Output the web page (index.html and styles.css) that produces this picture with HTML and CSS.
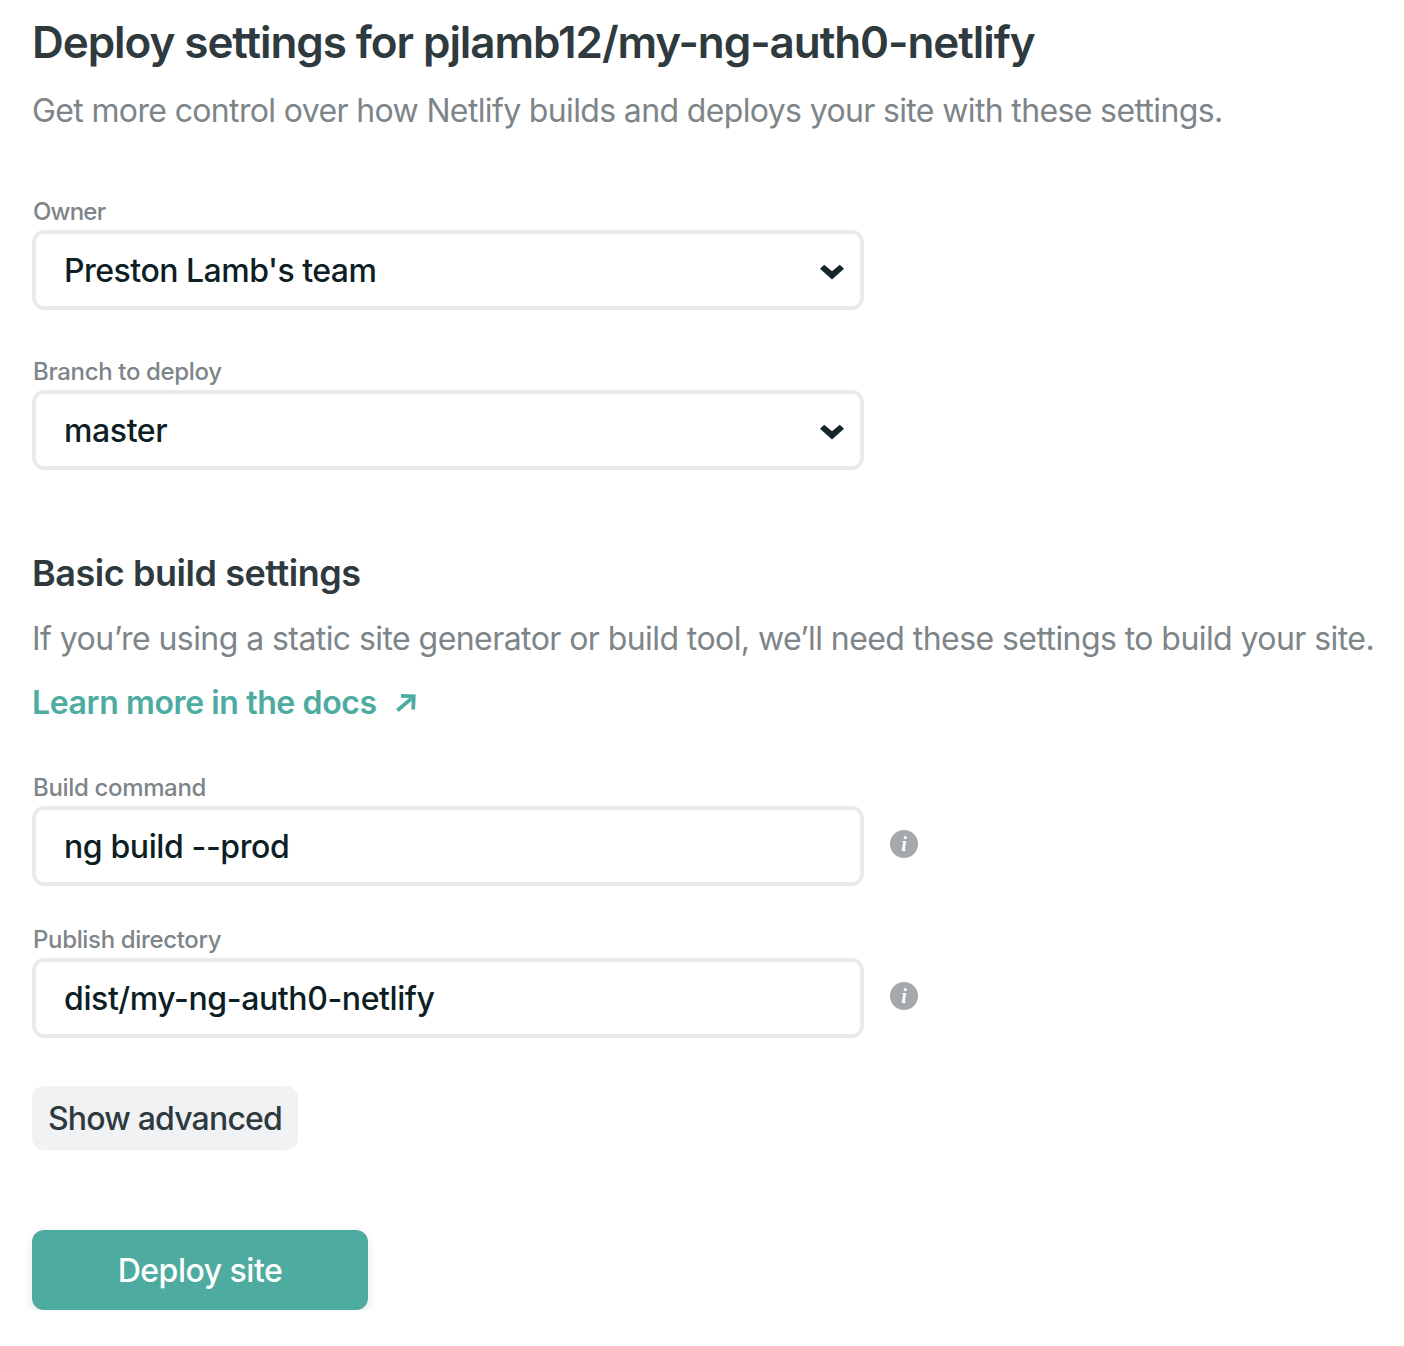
FILE: index.html
```html
<!DOCTYPE html>
<html lang="en">
<head>
<meta charset="utf-8">
<title>Deploy settings</title>
<link rel="stylesheet" href="styles.css">
</head>
<body>
<main class="page">
  <h1 class="title">Deploy settings for pjlamb12/my-ng-auth0-netlify</h1>
  <p class="text intro">Get more control over how Netlify builds and deploys your site with these settings.</p>

  <div class="field">
    <span class="label owner">Owner</span>
    <div class="control">
      <span class="value team">Preston Lamb's team</span>
      <svg class="chevron" width="24" height="16" viewBox="0 0 24 16"><path d="M0 4.8 4.2.8l7.8 6.4L19.8.8 24 4.8 12 15.4Z" fill="#15262c"/></svg>
    </div>
  </div>
  <div class="field branch-field">
    <span class="label branch">Branch to deploy</span>
    <div class="control">
      <span class="value master">master</span>
      <svg class="chevron" width="24" height="16" viewBox="0 0 24 16"><path d="M0 4.8 4.2.8l7.8 6.4L19.8.8 24 4.8 12 15.4Z" fill="#15262c"/></svg>
    </div>
  </div>

  <h2 class="subtitle">Basic build settings</h2>
  <p class="text hint">If you’re using a static site generator or build tool, we’ll need these settings to build your site.</p>
  <a class="link"><span>Learn more in the docs</span><svg width="22" height="20" viewBox="0 0 22 20"><path d="M2.3 17.5 17 5.2M6 2.8 18.8 3.3 18.2 16.5" fill="none" stroke="#4dab9f" stroke-width="3.7"/></svg></a>

  <div class="field command-field">
    <span class="label command">Build command</span>
    <div class="row">
      <div class="control"><span class="value build">ng build --prod</span></div>
      <span class="info">i</span>
    </div>
  </div>
  <div class="field publish-field">
    <span class="label publish">Publish directory</span>
    <div class="row">
      <div class="control"><span class="value dist">dist/my-ng-auth0-netlify</span></div>
      <span class="info">i</span>
    </div>
  </div>

  <button class="button advanced">Show advanced</button>
  <button class="button deploy">Deploy site</button>
</main>
</body>
</html>
```
FILE: styles.css
```css
* { box-sizing: border-box; }
body { margin: 0; background: #fff; font-family: Inter, "Liberation Sans", sans-serif; }
.page { display: flex; flex-direction: column; align-items: flex-start; padding: 13px 0 0 32px; }
.title, .subtitle, .text { margin: 0; white-space: nowrap; }
.title { font-size: 44px; line-height: 58px; font-weight: 600; letter-spacing: -1.06px; color: #2f3a3f; }
.text { font-size: 32px; line-height: 48px; letter-spacing: -0.64px; color: #7d8589; }
.intro { margin-top: 16px; }
.field { display: flex; flex-direction: column; align-items: flex-start; }
.intro + .field { margin-top: 57px; }
.label { padding: 2px 0 0 1px; font-size: 24px; line-height: 36px; font-weight: 500; letter-spacing: -0.34px; color: #7d8589; white-space: nowrap; }
.owner { letter-spacing: -0.8px; }
.control { display: flex; align-items: center; justify-content: space-between; width: 832px; height: 80px; padding: 0 16px 0 28px; border: 4px solid #e9ebeb; border-radius: 12px; }
.value { padding-top: 2px; font-size: 32px; line-height: 40px; font-weight: 500; letter-spacing: -0.4px; color: #0e1e25; white-space: nowrap; }
.team { letter-spacing: -0.5px; }
.chevron { margin-top: 4px; }
.branch-field { margin-top: 42px; }
.subtitle { margin-top: 80px; font-size: 36px; line-height: 46px; font-weight: 600; letter-spacing: -0.45px; color: #2f3a3f; }
.hint { margin-top: 19px; letter-spacing: -0.57px; }
.link { display: flex; align-items: center; gap: 18px; margin-top: 16px; font-size: 32px; line-height: 48px; font-weight: 600; letter-spacing: -0.39px; color: #4dab9f; white-space: nowrap; }
.command-field { margin-top: 41px; }
.row { display: flex; align-items: center; gap: 26px; }
.info { width: 28px; height: 28px; margin-top: -4px; border-radius: 50%; background: #a3a9ac; color: #fff; font: italic bold 20px/28px "Liberation Serif", serif; text-align: center; }
.publish-field { margin-top: 34px; }
.button { padding: 1px 0 0; border: 0; border-radius: 12px; font-family: inherit; font-size: 32px; font-weight: 500; white-space: nowrap; }
.advanced { width: 266px; height: 64px; margin-top: 48px; background: #f0f2f4; color: #2f3a3f; letter-spacing: -0.82px; }
.deploy { width: 336px; height: 80px; margin-top: 80px; background: #4dab9f; color: #fff; letter-spacing: -0.5px; box-shadow: 0 4px 8px rgba(14, 30, 37, 0.12); }
```
